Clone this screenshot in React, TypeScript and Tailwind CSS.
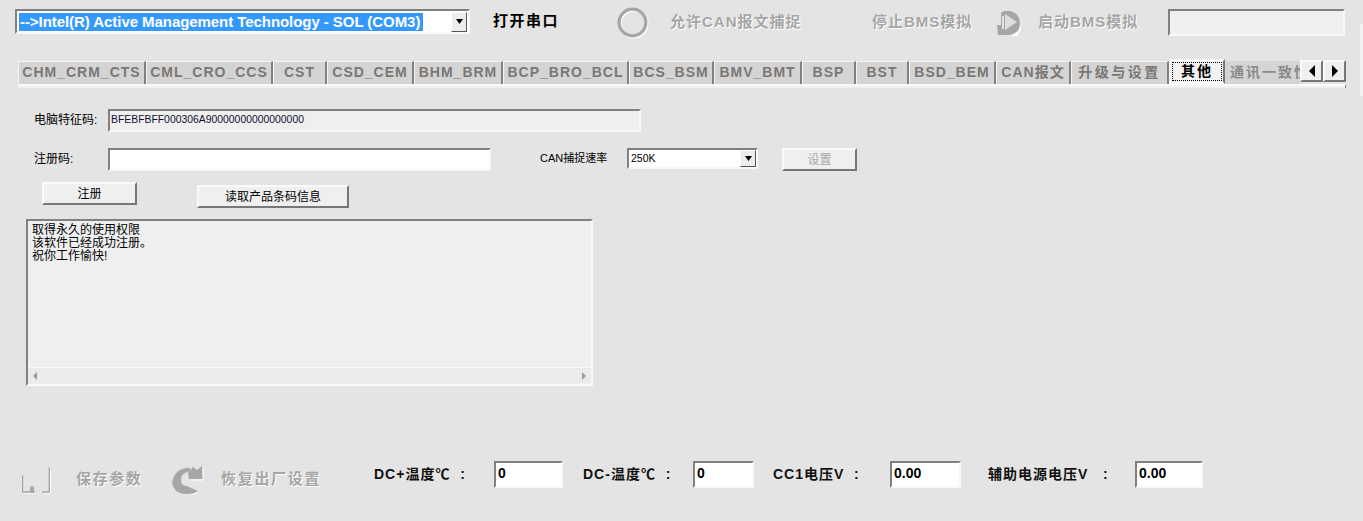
const font = "font-['Liberation_Sans','Noto_Sans_CJK_SC',sans-serif]";

const tabs: [string, number][] = [
  ["CHM_CRM_CTS", 128],
  ["CML_CRO_CCS", 127],
  ["CST", 54],
  ["CSD_CEM", 87],
  ["BHM_BRM", 89],
  ["BCP_BRO_BCL", 126],
  ["BCS_BSM", 85],
  ["BMV_BMT", 88],
  ["BSP", 54],
  ["BST", 53],
  ["BSD_BEM", 87],
  ["CAN报文", 75],
  ["升级与设置", 98],
];

function Arrow({ dir }: { dir: "down" | "left" | "right" }) {
  if (dir === "down")
    return <svg width="9" height="5" viewBox="0 0 9 5"><path d="M1 0H8L4.5 5Z" fill="#000" /></svg>;
  return (
    <svg width="8" height="12" viewBox="0 0 8 12">
      <path d={dir === "left" ? "M7 0V12L1 6Z" : "M1 0V12L7 6Z"} fill="#000" />
    </svg>
  );
}

function ComboButton({ className }: { className: string }) {
  return (
    <div className={`flex items-center justify-center bg-[#ececec] border border-t-white border-l-white border-r-[#555] border-b-[#555] ${className}`}>
      <Arrow dir="down" />
    </div>
  );
}

function Sunken({ className, children }: { className: string; children?: React.ReactNode }) {
  return (
    <div className={`border-2 border-t-[#808080] border-l-[#808080] border-r-[#f8f8f8] border-b-[#f8f8f8] ${className}`}>
      {children}
    </div>
  );
}

function Raised({ className, children }: { className: string; children?: React.ReactNode }) {
  return (
    <div className={`flex items-center justify-center bg-[#efefef] border-2 border-t-[#fafafa] border-l-[#fafafa] border-r-[#777] border-b-[#777] ${className}`}>
      {children}
    </div>
  );
}

function Disabled({ className, children }: { className: string; children: React.ReactNode }) {
  return (
    <span className={`font-bold text-[#a6a6a6] [text-shadow:1px_1px_0_#fff] whitespace-nowrap ${className}`}>
      {children}
    </span>
  );
}

function Value({ className, value }: { className: string; value: string }) {
  return (
    <Sunken className={`h-[27px] bg-white pl-[2px] pt-[1px] text-[14px] leading-[18px] font-bold text-black ${className}`}>
      {value}
    </Sunken>
  );
}

function Label({ className, children }: { className: string; children: React.ReactNode }) {
  return <span className={`text-[14px] font-bold text-[#111] whitespace-nowrap tracking-[1px] ${className}`}>{children}</span>;
}

export default function App() {
  return (
    <div className={`${font} relative w-[1363px] h-[521px] overflow-hidden bg-[#e4e4e4] flex flex-col`}>
      <div className="absolute right-0 top-[24px] w-[3px] h-[72px] bg-[#f1f1f1]" />

      {/* top bar */}
      <div className="flex items-center h-[30px] mt-[7px]">
        <Sunken className="ml-[15px] mb-[1px] w-[455px] h-[25px] bg-white flex items-center justify-between pl-[2px] pr-[1px]">
          <span className="bg-[#3399ff] text-white font-bold text-[15px] leading-[18px] h-[18px] pl-[1px] w-[404px] tracking-[-0.06px] whitespace-nowrap">
            --&gt;Intel(R) Active Management Technology - SOL (COM3)
          </span>
          <ComboButton className="w-[16px] h-[20px]" />
        </Sunken>
        <span className="ml-[23px] mb-[2px] w-[68px] text-[15px] font-bold text-black tracking-[1.5px] whitespace-nowrap">打开串口</span>
        <svg className="ml-[56px] mt-[2px]" width="32" height="32" viewBox="0 0 32 32">
          <circle cx="16.6" cy="16.6" r="13.4" fill="none" stroke="#fff" strokeWidth="3" />
          <circle cx="15.5" cy="15.5" r="13.4" fill="none" stroke="#a6a6a6" strokeWidth="3.2" />
        </svg>
        <Disabled className="ml-[21px] w-[202px] text-[15px] tracking-[1px]">允许CAN报文捕捉</Disabled>
        <Disabled className="w-[123px] text-[15px] tracking-[1px]">停止BMS模拟</Disabled>
        <svg className="mt-[2px]" width="26" height="26" viewBox="0 0 26 26">
          <path d="M9 1H15Q25 4 25 13Q25 23 14 25H3L2 15H6V3Z" fill="#a6a6a6" />
          <path d="M10 4L22 12L10 20Z" fill="#dedede" />
          <path d="M7 6H9V19H7Z" fill="#e4e4e4" />
          <path d="M25 7L26 13L24 21L16 26H22L26 20V9Z" fill="#fff" />
        </svg>
        <Disabled className="ml-[17px] w-[130px] text-[15px] tracking-[1px]">启动BMS模拟</Disabled>
        <Sunken className="w-[177px] h-[27px] bg-[#efefef]" />
      </div>

      {/* tab strip */}
      <div className="ml-[18px] mt-[23px] w-[1328px] flex flex-col">
        <div className="flex h-[24px] items-end">
          {tabs.map(([t, w]) => (
            <div
              key={t}
              style={{ width: w }}
              className={`h-[23px] pb-[2px] shrink-0 flex items-center justify-center bg-[#d4d4d4] border-t border-l border-t-[#f4f4f4] border-l-[#f4f4f4] border-r-2 border-r-[#808080] text-[14px] font-bold text-[#7b7775] whitespace-nowrap ${t === "升级与设置" ? "tracking-[2.5px]" : "tracking-[1px]"}`}
            >
              {t}
            </div>
          ))}
          <div className="w-[56px] h-[25px] shrink-0 bg-[#f2f2f2] border-2 border-[#fafafa] border-r-[#777] flex items-center justify-center p-[1px]">
            <div className="w-full h-full border border-dotted border-black flex items-center justify-center text-[14px] font-bold text-black tracking-[2px]">其他</div>
          </div>
          <div className="flex-1 min-w-0 h-[23px] bg-[#d4d4d4] overflow-hidden pl-[5px] flex items-center text-[14px] font-bold text-[#8a8a8a] tracking-[2px] whitespace-nowrap">
            通讯一致性
          </div>
          <div className="flex shrink-0 h-[24px]">
            <Raised className="w-[23px] h-[22px] bg-[#e8e8e8]"><Arrow dir="left" /></Raised>
            <Raised className="w-[23px] h-[22px] bg-[#e8e8e8]"><Arrow dir="right" /></Raised>
          </div>
        </div>
        <div className="h-[4px] bg-[#efefef] border-t-2 border-t-[#fafafa] border-r border-r-[#808080]" />
      </div>

      {/* form */}
      <div className="flex items-center h-[23px] mt-[21px] text-[12px] text-black">
        <span className="ml-[34px] mb-[2px] w-[74px] whitespace-nowrap">电脑特征码:</span>
        <Sunken className="w-[533px] h-[23px] bg-[#efefef] flex items-center pl-[1px] pb-[1px] text-[10.4px] text-[#101030]">
          BFEBFBFF000306A90000000000000000
        </Sunken>
      </div>

      <div className="flex items-start h-[23px] mt-[16px] text-[12px] text-black">
        <span className="ml-[34px] w-[74px] leading-[22px] whitespace-nowrap">注册码:</span>
        <Sunken className="w-[383px] h-[23px] bg-white" />
        <span className="ml-[49px] w-[87px] text-[11px] leading-[21px] whitespace-nowrap">CAN捕捉速率</span>
        <Sunken className="w-[131px] h-[21px] bg-white flex items-center justify-between pl-[2px] text-[10.5px]">
          250K
          <ComboButton className="w-[16px] h-[17px]" />
        </Sunken>
        <Raised className="ml-[24px] w-[75px] h-[23px] text-[12px] text-[#a8a8a8]">设置</Raised>
      </div>

      <div className="flex items-start h-[26px] mt-[11px] text-[12px] text-black">
        <Raised className="ml-[42px] w-[95px] h-[23px]">注册</Raised>
        <Raised className="ml-[60px] mt-[3px] w-[152px] h-[23px]">读取产品条码信息</Raised>
      </div>

      <Sunken className="ml-[26px] mt-[11px] w-[567px] h-[167px] bg-[#efefef] flex flex-col">
        <div className="flex-1 pl-[4px] pt-[3px] text-[12px] leading-[13px] text-black">
          <div>取得永久的使用权限</div>
          <div>该软件已经成功注册。</div>
          <div>祝你工作愉快!</div>
        </div>
        <div className="h-[16px] mb-[1px] bg-[#ebebeb] border-t border-[#f8f8f8] flex items-center justify-between px-[5px]">
          <svg width="4" height="8" viewBox="0 0 4 8"><path d="M4 0V8L0 4Z" fill="#9a9a9a" /></svg>
          <svg width="4" height="8" viewBox="0 0 4 8"><path d="M0 0V8L4 4Z" fill="#9a9a9a" /></svg>
        </div>
      </Sunken>

      {/* bottom */}
      <div className="flex items-center h-[40px] mt-[68px]">
        <svg className="ml-[20px]" width="32" height="40" viewBox="0 0 32 40">
          <path d="M3 22V38.500H15M29.700 14V38.500H22" fill="none" stroke="#fff" strokeWidth="1" transform="translate(0.7 0.7)" />
          <path d="M2.700 21.500V38H15M29.300 13.500V38H22" fill="none" stroke="#a6a6a6" strokeWidth="1.4" />
          <rect x="10" y="32.500" width="4" height="6" fill="#a6a6a6" />
        </svg>
        <Disabled className="ml-[24px] mt-[10px] w-[95px] text-[15px] tracking-[1.6px]">保存参数</Disabled>
        <svg className="mt-[13px]" width="34" height="32" viewBox="0 0 34 32">
          <path d="M3 12Q5 5 15 3L19 3L19 6L14 8Q10 10 10 15Q10 21 16 21L27 26Q23 29 15 29Q5 29 2 21Q0 16 3 12Z" fill="#a6a6a6" />
          <path d="M17 8L22 2L26 5L31 1L32 14H18Z" fill="#a6a6a6" />
          <path d="M32 3V15H20M27 27L22 30" fill="none" stroke="#fff" strokeWidth="1" />
        </svg>
        <Disabled className="ml-[16px] mt-[10px] w-[153px] text-[15px] tracking-[1.7px]">恢复出厂设置</Disabled>
        <Label className="w-[120px]">DC+温度℃&nbsp;&nbsp;:</Label>
        <Value className="w-[69px]" value="0" />
        <Label className="ml-[20px] w-[110px]">DC-温度℃&nbsp;&nbsp;:</Label>
        <Value className="w-[61px]" value="0" />
        <Label className="ml-[19px] w-[117px]">CC1电压V&nbsp;&nbsp;:</Label>
        <Value className="w-[71px]" value="0.00" />
        <Label className="ml-[27px] w-[147px]">辅助电源电压V&nbsp;&nbsp;&nbsp;:</Label>
        <Value className="w-[68px]" value="0.00" />
      </div>
    </div>
  );
}
